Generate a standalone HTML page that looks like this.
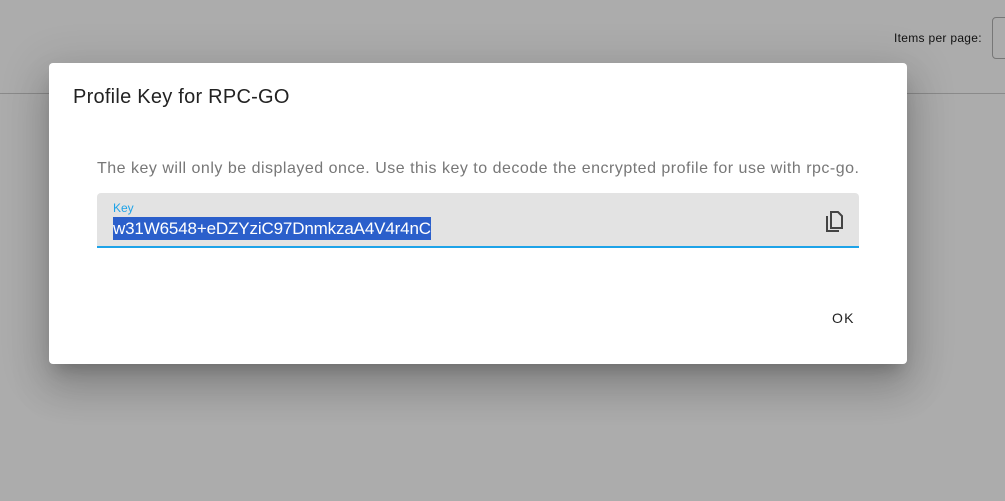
<!DOCTYPE html>
<html><head><style>
body{margin:0;width:1005px;height:501px;background:#acacac;font-family:"Liberation Sans",sans-serif;position:relative;overflow:hidden}
.line{position:absolute;left:0;right:0;top:93px;height:1px;background:#8a8a8a}
.ipp{position:absolute;left:894px;top:31px;font-size:12px;color:#111;letter-spacing:.3px}
.sel{position:absolute;left:992px;top:17px;width:30px;height:40px;border:1px solid #777;border-radius:4px}
.dlg{position:absolute;left:49px;top:63px;width:858px;height:301px;background:#fff;border-radius:4px;box-shadow:0 11px 15px -7px rgba(0,0,0,.2),0 24px 38px 3px rgba(0,0,0,.14),0 9px 46px 8px rgba(0,0,0,.12)}
h2{position:absolute;left:24px;top:23px;margin:0;font-weight:400;font-size:20px;color:#222;letter-spacing:.25px}
.p{position:absolute;left:48px;top:97px;font-size:16px;color:#777;letter-spacing:.5px}
.f{position:absolute;left:48px;top:130px;width:762px;height:53px;background:#e3e3e3;border-radius:4px 4px 0 0;border-bottom:2px solid #1ea3e8}
.lab{position:absolute;left:16px;top:8px;font-size:12px;color:#1ea3e8}
.v{position:absolute;left:16px;top:24px;font-size:17px;color:#fff;background:#2b5fcb;padding:1px 0;line-height:21px;letter-spacing:-.15px}
.ic{position:absolute;left:726px;top:17px}
.ok{position:absolute;left:783px;top:247px;font-size:14px;letter-spacing:1.2px;color:#222}
</style></head><body>
<div class="line"></div>
<div class="ipp">Items per page:</div><div class="sel"></div>
<div class="dlg">
<h2>Profile Key for RPC-GO</h2>
<div class="p">The key will only be displayed once. Use this key to decode the encrypted profile for use with rpc-go.</div>
<div class="f"><div class="lab">Key</div><div class="v">w31W6548+eDZYziC97DnmkzaA4V4r4nC</div>
<svg class="ic" width="22" height="24" viewBox="0 0 22 24" fill="none" stroke="#444" stroke-width="2"><path d="M4 6v15h12"/><path d="M8 2h7l4 4v12H8z"/></svg></div>
<div class="ok">OK</div>
</div>
</body></html>
